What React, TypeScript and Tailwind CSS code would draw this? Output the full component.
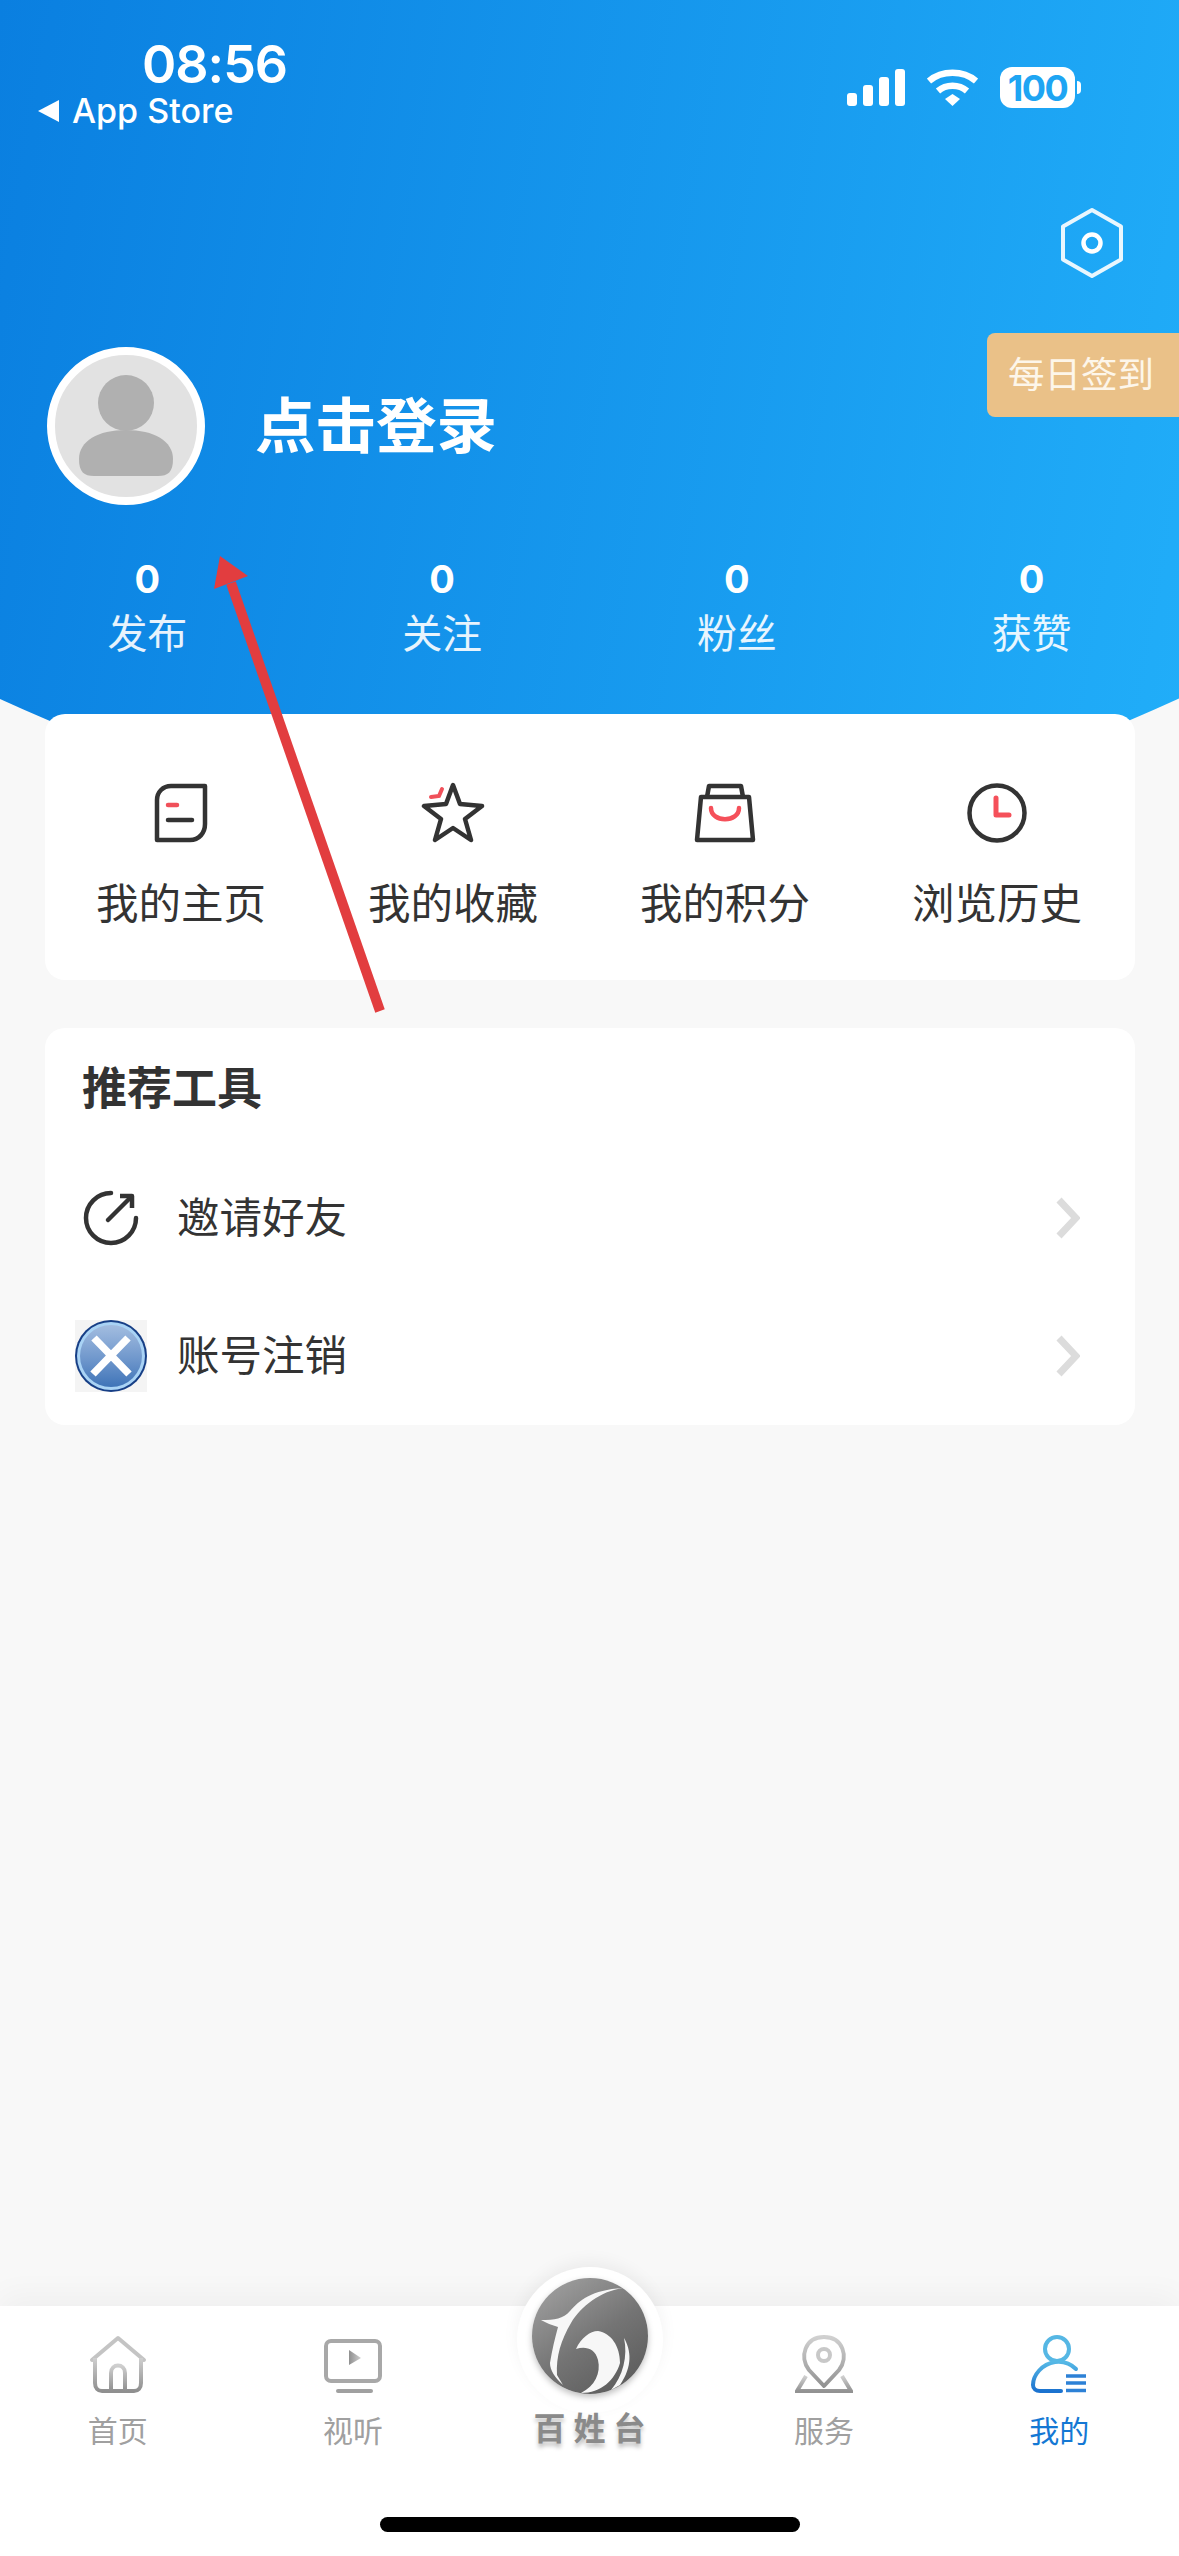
const FONT = "font-['Inter','Noto_Sans_CJK_SC',sans-serif]";

const stats = ['发布', '关注', '粉丝', '获赞'];

function PageIcon() {
  return (
    <svg width="54" height="60" viewBox="0 0 54 60" fill="none">
      <path d="M17 3H51V41C51 50 45 57 36 57H3V17C3 9 9 3 17 3Z" fill="#fff" stroke="#333" strokeWidth="4.5" strokeLinejoin="round" />
      <path d="M14 22H23" stroke="#f0505a" strokeWidth="4.5" strokeLinecap="round" />
      <path d="M14 37H38" stroke="#333" strokeWidth="4.5" strokeLinecap="round" />
    </svg>
  );
}

function StarIcon() {
  return (
    <svg width="64" height="62" viewBox="0 0 64 62" fill="none">
      <path d="M32 3L39 22L61 24L44 37L50 58L32 46L14 58L20 37L3 24L25 22Z" stroke="#333" strokeWidth="4.5" strokeLinejoin="round" />
      <path d="M10 15L18 14L21 7" stroke="#f0505a" strokeWidth="4" strokeLinecap="round" />
    </svg>
  );
}

function BagIcon() {
  return (
    <svg width="62" height="60" viewBox="0 0 62 60" fill="none">
      <path d="M13 14L15 3H47L49 14" stroke="#333" strokeWidth="4.5" strokeLinejoin="round" />
      <path d="M7 14H55L59 57H3Z" stroke="#333" strokeWidth="4.5" strokeLinejoin="round" />
      <path d="M17 25C17 40 45 40 45 25" stroke="#f5505a" strokeWidth="4.5" strokeLinecap="round" />
    </svg>
  );
}

function ClockIcon() {
  return (
    <svg width="62" height="62" viewBox="0 0 62 62" fill="none">
      <circle cx="31" cy="31" r="27.5" stroke="#333" strokeWidth="4.5" />
      <path d="M30 16V33H43" stroke="#f5505a" strokeWidth="5" strokeLinecap="round" strokeLinejoin="round" />
    </svg>
  );
}

function InviteIcon() {
  return (
    <svg width="56" height="56" viewBox="0 0 56 56" fill="none" className="shrink-0">
      <path d="M28 3A25 25 0 1 0 53 28" stroke="#333" strokeWidth="4.5" strokeLinecap="round" />
      <path d="M25 30L47 8" stroke="#333" strokeWidth="4.5" strokeLinecap="round" />
      <path d="M37 6H49V18" stroke="#333" strokeWidth="4.5" strokeLinejoin="round" />
    </svg>
  );
}

function CancelIcon() {
  return (
    <svg width="72" height="72" viewBox="0 0 72 72" className="shrink-0 bg-[#f4f4f4]">
      <defs>
        <linearGradient id="xfill" x1="0" y1="0" x2="0" y2="1">
          <stop offset="0" stopColor="#a3bde0" />
          <stop offset="0.55" stopColor="#6f97cc" />
          <stop offset="1" stopColor="#3f74b8" />
        </linearGradient>
      </defs>
      <circle cx="36" cy="36" r="36" fill="#173f86" />
      <circle cx="36" cy="36" r="34" fill="#a9d3f5" />
      <circle cx="36" cy="36" r="31" fill="url(#xfill)" />
      <path d="M19 18L54 54M53 18L18 54" stroke="#fff" strokeWidth="7.5" />
    </svg>
  );
}

function Chevron() {
  return (
    <svg width="24" height="42" viewBox="0 0 24 42" fill="none" className="shrink-0">
      <path d="M3 3L20 21L3 39" stroke="#dcdcdc" strokeWidth="7" />
    </svg>
  );
}

function HomeIcon() {
  return (
    <svg width="58" height="58" viewBox="0 0 58 58" fill="none">
      <defs>
        <linearGradient id="grayv" x1="0" y1="0" x2="0" y2="1">
          <stop offset="0" stopColor="#cfcfcf" />
          <stop offset="1" stopColor="#8f8f8f" />
        </linearGradient>
      </defs>
      <path d="M3 25L29 3L55 25" stroke="#c4c4c4" strokeWidth="4" strokeLinecap="round" strokeLinejoin="round" />
      <path d="M6 23V48C6 53 9 56 13 56H45C49 56 52 53 52 48V23" stroke="url(#grayv)" strokeWidth="4" />
      <path d="M22 56V38C22 28 36 28 36 38V56" stroke="url(#grayv)" strokeWidth="4" />
    </svg>
  );
}

function VideoIcon() {
  return (
    <svg width="58" height="54" viewBox="0 0 58 54" fill="none">
      <defs>
        <linearGradient id="grayh" x1="0" y1="0" x2="1" y2="0">
          <stop offset="0" stopColor="#8f8f8f" />
          <stop offset="1" stopColor="#cfcfcf" />
        </linearGradient>
      </defs>
      <rect x="2" y="2" width="54" height="40" rx="5" stroke="#a8a8a8" strokeWidth="4" />
      <path d="M2 31H56" stroke="url(#grayh)" strokeWidth="4" />
      <path d="M25 11L37 19L25 26Z" fill="url(#grayh)" />
      <path d="M14 52H47" stroke="#a0a0a0" strokeWidth="4" strokeLinecap="round" />
    </svg>
  );
}

function ServiceIcon() {
  return (
    <svg width="58" height="58" viewBox="0 0 58 58" fill="none">
      <defs>
        <linearGradient id="graydn" x1="0" y1="0" x2="0" y2="1">
          <stop offset="0" stopColor="#d0d0d0" />
          <stop offset="1" stopColor="#929292" />
        </linearGradient>
      </defs>
      <path d="M29 51L14 35C4 22 10 2 29 2C48 2 54 22 44 35Z" stroke="url(#graydn)" strokeWidth="4" strokeLinejoin="round" />
      <circle cx="29" cy="20" r="6" stroke="#c8c8c8" strokeWidth="4" />
      <path d="M11 41L2 56H56L47 41" stroke="url(#graydn)" strokeWidth="4" />
    </svg>
  );
}

function MineIcon() {
  return (
    <svg width="58" height="58" viewBox="0 0 58 58" fill="none">
      <defs>
        <linearGradient id="bluev" x1="0" y1="0" x2="0" y2="1">
          <stop offset="0" stopColor="#56b9e6" />
          <stop offset="1" stopColor="#1b72cf" />
        </linearGradient>
      </defs>
      <circle cx="27" cy="14" r="12" stroke="#56b7e4" strokeWidth="4" />
      <path d="M46 34C40 28 33 26 25 27C12 29 3 40 3 50C3 54 6 56 10 56H31" stroke="url(#bluev)" strokeWidth="4" strokeLinecap="round" />
      <path d="M36 41H56M36 48H56M36 55.5H56" stroke="#2d81d6" strokeWidth="3.5" />
    </svg>
  );
}

function LogoMark() {
  return (
    <svg width="116" height="116" viewBox="0 0 116 116">
      <defs>
        <linearGradient id="logog" x1="0" y1="0" x2="0.7" y2="1">
          <stop offset="0" stopColor="#a6a6a6" />
          <stop offset="0.6" stopColor="#747474" />
          <stop offset="1" stopColor="#5e5e5e" />
        </linearGradient>
      </defs>
      <circle cx="58" cy="58" r="58" fill="url(#logog)" />
      <path d="M9 42C23 42 31 41 38 33C48 22 59 12 91 10C69 13 49 28 39 45C29 62 24 78 25 97L31 107C23 100 18 92 18 85C20 72 23 60 26 49C20 47 14 45 9 42Z" fill="#f7f7f7" />
      <path d="M44 71C53 68 63 70 66 82C69 95 63 108 49 115C69 115 83 102 88 85C88 68 79 55 66 53C58 53 49 60 44 71Z" fill="#f7f7f7" />
      <path d="M92 60C99 72 101 88 88 107L79 112C91 98 96 78 92 60Z" fill="#f7f7f7" />
    </svg>
  );
}

const toolRows = [
  { label: '邀请好友', icon: <InviteIcon /> },
  { label: '账号注销', icon: <CancelIcon /> },
];

const quickLinks = [
  { label: '我的主页', icon: <PageIcon /> },
  { label: '我的收藏', icon: <StarIcon /> },
  { label: '我的积分', icon: <BagIcon /> },
  { label: '浏览历史', icon: <ClockIcon /> },
];

const tabs = [
  { label: '首页', icon: <HomeIcon /> },
  { label: '视听', icon: <VideoIcon /> },
  { label: '', icon: null },
  { label: '服务', icon: <ServiceIcon /> },
  { label: '我的', icon: <MineIcon />, active: true },
];

export default function App() {
  return (
    <div className={`${FONT} relative flex h-[2556px] w-[1179px] flex-col overflow-hidden bg-[#f8f8f8]`}>
      {/* blue header, the curve only shows at the two edges */}
      <header className="h-[828px] shrink-0 bg-[linear-gradient(100deg,#0a7fe0,#21aef9)] text-white [clip-path:circle(1410px_at_589px_-582px)]">
        <div className="flex h-[150px] justify-between pl-[38px] pr-[98px]">
          <div className="pt-[39px]">
            <p className="pl-[104px] text-[52px] leading-[52px] font-semibold tracking-[-1px]">08:56</p>
            <p className="flex items-center gap-[13px] text-[34px] leading-[40px] font-medium">
              <span className="h-0 w-0 border-y-[11px] border-r-[21px] border-y-transparent border-r-white" />
              App Store
            </p>
          </div>
          <div className="flex h-[108px] items-end gap-[22px]">
            <svg width="58" height="37" viewBox="0 0 58 37" fill="#fff" className="mb-[2px]">
              <rect x="0" y="24" width="10" height="13" rx="3" />
              <rect x="16" y="16" width="10" height="21" rx="3" />
              <rect x="32" y="8" width="10" height="29" rx="3" />
              <rect x="48" y="0" width="10" height="37" rx="3" />
            </svg>
            <svg width="51" height="37" viewBox="0 0 51 37" fill="none" className="mb-[2px]">
              <path d="M2 12C15 1 36 1 49 12" stroke="#fff" strokeWidth="6.5" />
              <path d="M11 22C19 15 32 15 40 22" stroke="#fff" strokeWidth="6.5" />
              <path d="M18 30L25.5 25L33 30L25.5 37Z" fill="#fff" />
            </svg>
            <div className="flex items-center">
              <span className="flex h-[41px] w-[75px] items-center justify-center rounded-[12px] bg-white text-[36px] font-bold tracking-[-1.5px] text-[#1ea5f3]">
                100
              </span>
              <span className="ml-[2px] h-[13px] w-[4px] rounded-r-full bg-white" />
            </div>
          </div>
        </div>

        <div className="flex justify-end pr-[54px] pt-[57px]">
          <svg width="66" height="72" viewBox="0 0 66 72" fill="none">
            <path d="M33 3L62 19.5V52.5L33 69L4 52.5V19.5Z" stroke="#fff" strokeOpacity="0.9" strokeWidth="4" strokeLinejoin="round" />
            <circle cx="33" cy="36" r="8.5" stroke="#fff" strokeWidth="4.5" />
          </svg>
        </div>

        <div className="mt-[68px] flex items-center gap-[50px] pl-[47px]">
          <div className="flex h-[158px] w-[158px] items-center justify-center rounded-full border-[8px] border-white bg-[#e2e2e2]">
            <svg width="96" height="102" viewBox="0 0 96 102" fill="#b0b0b0">
              <circle cx="48" cy="28" r="28" />
              <path d="M1 84C1 66 20 55 48 55C76 55 95 66 95 84C95 97 90 101 80 101H16C6 101 1 97 1 84Z" />
            </svg>
          </div>
          <h1 className="text-[60.5px] leading-none font-bold">点击登录</h1>
        </div>

        <div className="mt-[52px] grid grid-cols-4 text-center">
          {stats.map(label => (
            <div key={label} className="flex flex-col items-center">
              <span className="text-[38px] leading-[44px] font-bold">0</span>
              <span className="mt-[9px] text-[40px] leading-[48px] text-white/90">{label}</span>
            </div>
          ))}
        </div>
      </header>

      {/* daily check-in tab */}
      <div className="absolute right-0 top-[333px] flex h-[84px] w-[192px] items-center rounded-l-[8px] bg-[#eac188] pl-[21px] text-[36.5px] text-[#fdf6ea]">
        每日签到
      </div>

      <main className="relative -mt-[114px] flex flex-col gap-[48px] pl-[45px] pr-[44px]">
        <section className="grid h-[266px] grid-cols-4 rounded-[20px] bg-white pr-[2px]">
          {quickLinks.map(item => (
            <div key={item.label} className="flex flex-col items-center pt-[68px]">
              <div className="flex h-[62px] items-center">{item.icon}</div>
              <span className="mt-[32px] text-[42.5px] leading-[56px] text-[#333]">{item.label}</span>
            </div>
          ))}
        </section>

        <section className="h-[397px] rounded-[20px] bg-white pl-[37px] pr-[55px] pt-[33px]">
          <h2 className="text-[45px] leading-[56px] font-bold text-[#333]">推荐工具</h2>
          <ul className="mt-[32px] flex flex-col">
            {toolRows.map(row => (
              <li key={row.label} className="flex h-[138px] items-center pl-[1px]">
                <span className="flex w-[55px] justify-center">{row.icon}</span>
                <span className="ml-[39px] flex-1 text-[42.5px] text-[#333]">{row.label}</span>
                <Chevron />
              </li>
            ))}
          </ul>
        </section>
      </main>

      {/* tab bar */}
      <nav className="absolute bottom-0 left-0 h-[250px] w-full bg-white shadow-[0_-10px_30px_rgba(0,0,0,0.04)]">
        <div className="grid grid-cols-5 pr-[2px] pt-[28px]">
          {tabs.map((tab, i) => (
            <div key={i} className="flex flex-col items-center">
              <div className="flex h-[59px] items-end">{tab.icon}</div>
              {tab.label && (
                <span className={`mt-[18px] text-[30px] leading-[40px] ${tab.active ? 'text-[#1478d4]' : 'text-[#a0a0a0]'}`}>
                  {tab.label}
                </span>
              )}
            </div>
          ))}
        </div>
        <div className="absolute bottom-[24px] left-1/2 h-[15px] w-[420px] -translate-x-1/2 rounded-full bg-black" />
      </nav>

      {/* raised logo */}
      <div className="absolute left-1/2 top-[2267px] flex -translate-x-1/2 flex-col items-center">
        <div className="flex h-[146px] w-[146px] justify-center rounded-full bg-white pt-[11px] shadow-[0_-6px_16px_rgba(0,0,0,0.05)]">
          <div className="h-[116px] w-[116px] rounded-full shadow-[0_3px_6px_rgba(0,0,0,0.25)]">
            <LogoMark />
          </div>
        </div>
        <span className="-mt-[4px] pl-[8px] text-[32px] leading-[40px] font-bold tracking-[8px] text-[#8a8a8a] [text-shadow:0_4px_4px_rgba(0,0,0,0.25)]">
          百姓台
        </span>
      </div>

      {/* red arrow drawn over the page */}
      <svg className="absolute left-[205px] top-[550px]" width="190" height="470" viewBox="0 0 190 470" fill="none">
        <path d="M26 33L175 461" stroke="#e23d3f" strokeWidth="10" />
        <path d="M15 6L9 39L43 26Z" fill="#e23d3f" />
      </svg>
    </div>
  );
}
